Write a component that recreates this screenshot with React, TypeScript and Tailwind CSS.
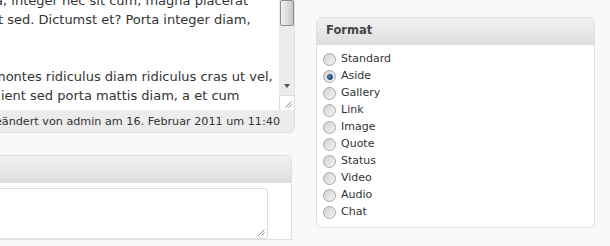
import React from 'react';

const formats = ['Standard', 'Aside', 'Gallery', 'Link', 'Image', 'Quote', 'Status', 'Video', 'Audio', 'Chat'];

function Grip() {
  return (
    <svg width="9" height="9" viewBox="0 0 9 9" className="absolute right-[2px] bottom-[2px]">
      <path d="M8.5 2.5 L2.5 8.5 M8.5 5.5 L5.5 8.5" stroke="#888" strokeWidth="1" />
    </svg>
  );
}

function Radio({ checked }: { checked?: boolean }) {
  return (
    <span className="relative w-[13px] h-[13px] shrink-0 rounded-full border border-[#a8a8a8] bg-linear-to-br from-[#cfcfcf] to-[#f7f7f7] flex items-center justify-center">
      {checked && (
        <span className="w-[6px] h-[6px] rounded-full bg-linear-to-br from-[#6fb3e6] to-[#0c3a6b] border border-[#0b3566]" />
      )}
    </span>
  );
}

export default function App() {
  return (
    <div className="w-[610px] h-[246px] bg-[#f9f9f9] flex overflow-hidden text-[#333] font-['DejaVu_Sans',Verdana,sans-serif]">
      {/* Left column: editor + comment box */}
      <div className="w-[295px] shrink-0 flex flex-col">
        <div className="h-[110px] flex">
          <div className="w-[279px] bg-white overflow-hidden text-[13px] leading-[19px] whitespace-nowrap">
            <div className="-mt-[9px]">
              <div className="-ml-[10px]">ta, integer nec sit cum, magna placerat</div>
              <div className="-ml-[2px]">t sed. Dictumst et? Porta integer diam,</div>
              <div>&nbsp;</div>
              <div>&nbsp;</div>
              <div className="-ml-[7px]">montes ridiculus diam ridiculus cras ut vel,</div>
              <div className="ml-[1px]">ient sed porta mattis diam, a et cum</div>
              <div className="-ml-[4px] mt-[2px]">pellentesque augue, elementum, placerat quis</div>
            </div>
          </div>
          <div className="w-[16px] flex flex-col border-r border-[#dfdfdf]">
            <div className="flex-1 bg-[#ececec] flex flex-col items-center">
              <div className="w-[14px] h-[26px] rounded-[2px] border border-[#8c8c8c] bg-linear-to-r from-[#f0f0f0] via-[#dedede] to-[#c4c4c4]" />
              <div className="flex-1" />
              <div className="mb-[7px] w-0 h-0 border-l-[3px] border-r-[3px] border-t-[4px] border-l-transparent border-r-transparent border-t-[#555]" />
            </div>
            <div className="relative h-[15px] bg-white border-t border-l border-[#dcdcdc]">
              <Grip />
            </div>
          </div>
        </div>
        <div className="h-[23px] bg-[#ececec] border-r border-b border-[#dfdfdf] rounded-br-[6px] text-[11.2px] leading-[23px] whitespace-nowrap flex justify-end pr-[14px] overflow-hidden">
          <span className="shrink-0">Zuletzt geändert von admin am 16. Februar 2011 um 11:40</span>
        </div>

        <div className="mt-[22px] w-[292px] border border-l-0 border-[#dfdfdf] rounded-tr-[6px] bg-white overflow-hidden">
          <div className="h-[27px] bg-linear-to-b from-[#f2f2f2] to-[#dedede] border-b border-[#dfdfdf]" />
          <div className="pt-[5px]">
            <div className="relative w-[268px] h-[51px] border border-l-0 border-[#dfdfdf] rounded-r-[4px] bg-white">
              <Grip />
            </div>
          </div>
        </div>
      </div>

      {/* Right column: Format box */}
      <div className="ml-[21px] mt-[17px] w-[279px] h-[211px] shrink-0 border border-[#dfdfdf] rounded-[6px] bg-white overflow-hidden">
        <div className="h-[27px] bg-linear-to-b from-[#f2f2f2] to-[#dedede] border-b border-[#dfdfdf] pl-[9px] flex items-center">
          <span className="text-[11.5px] font-bold text-[#464646]">Format</span>
        </div>
        <div className="pt-[6px] pl-[6px] flex flex-col">
          {formats.map((f) => (
            <label key={f} className="h-[17px] flex items-center gap-[5px] text-[11px]">
              <Radio checked={f === 'Aside'} />
              <span>{f}</span>
            </label>
          ))}
        </div>
      </div>
    </div>
  );
}
